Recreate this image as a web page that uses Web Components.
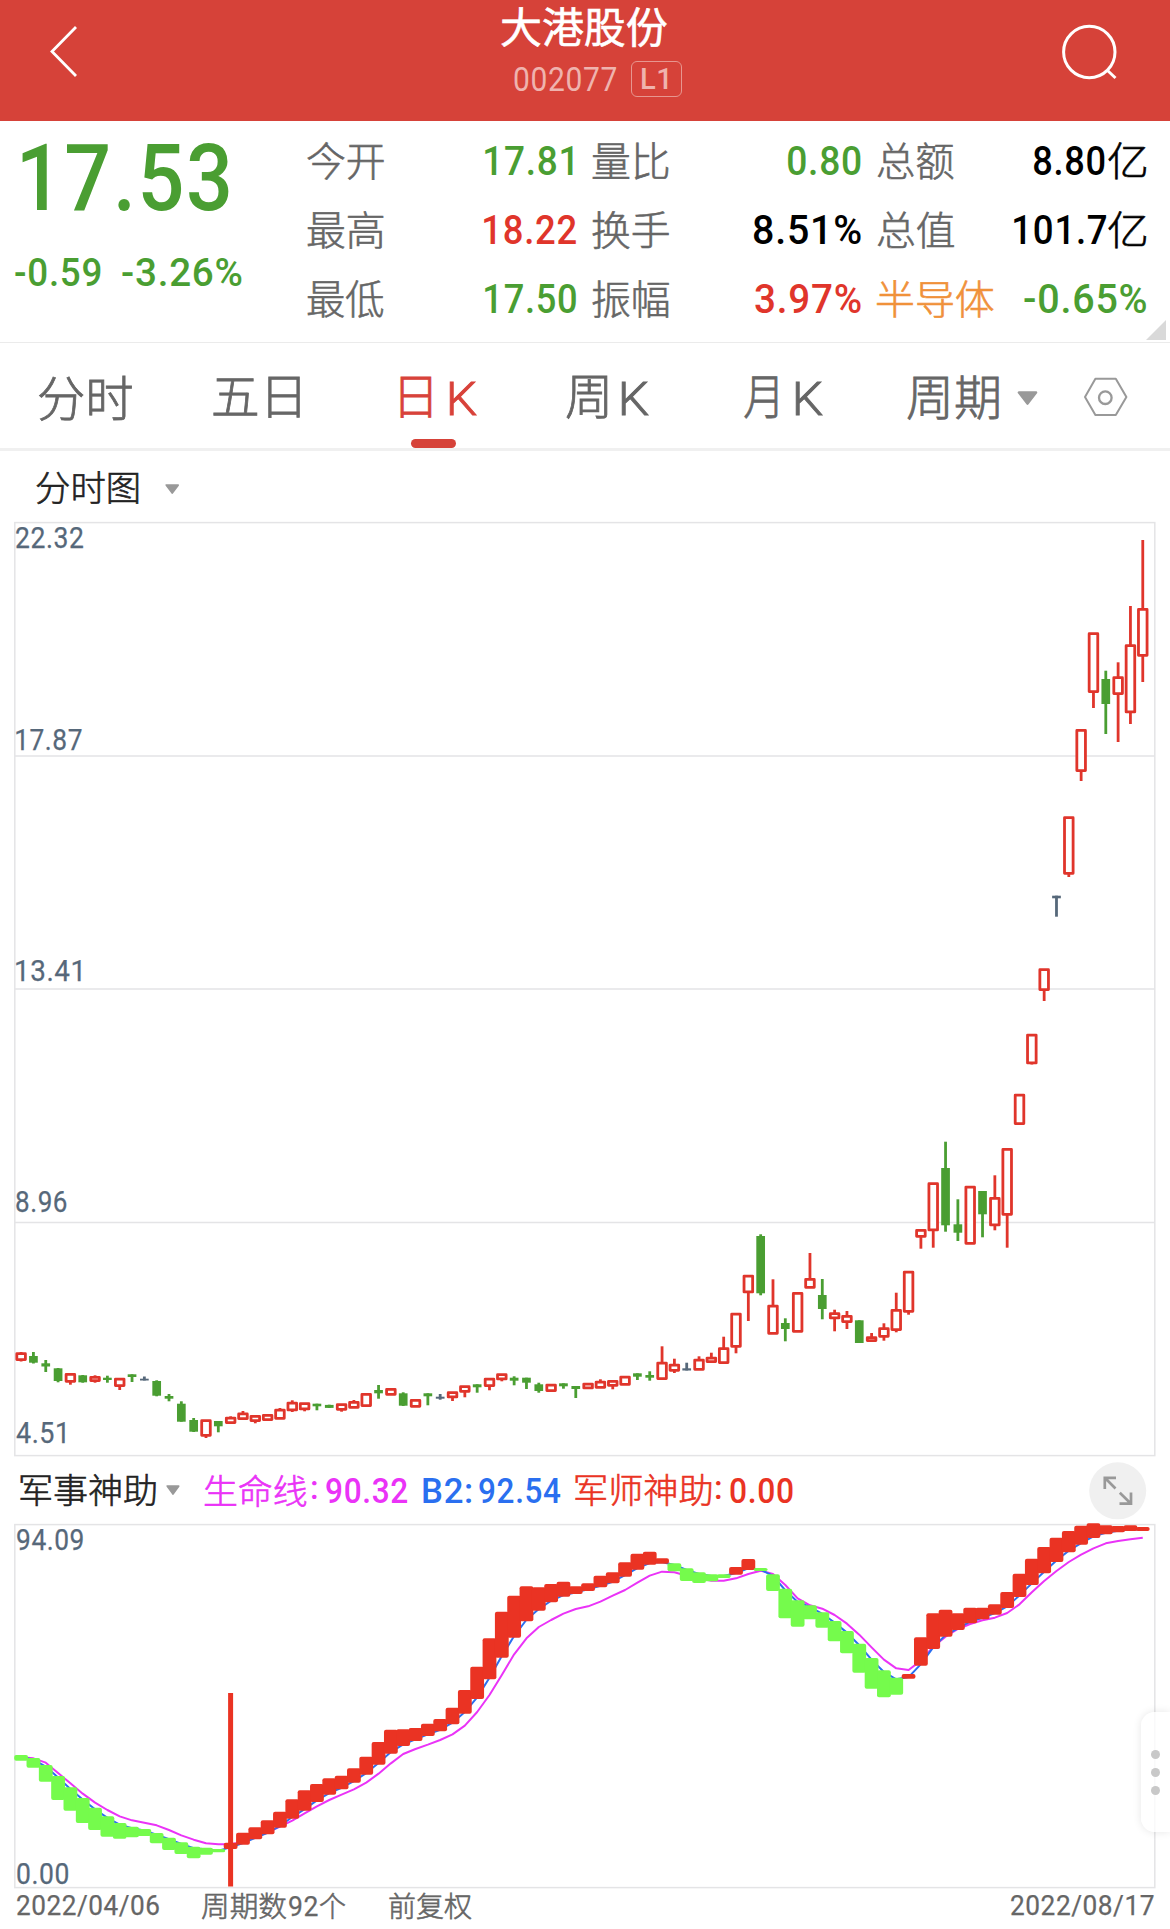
<!DOCTYPE html>
<html lang="zh-CN">
<head>
<meta charset="utf-8">
<title>大港股份 002077</title>
<style>
html,body{margin:0;padding:0;background:#fff}
body{width:1170px;height:1929px;overflow:hidden}
</style>
</head>
<body>
<stock-app></stock-app>
<script>
const GREEN='#4a9e32', RED='#e0352b', GREY='#56687a';
const FONT='Roboto,"Noto Sans CJK SC",sans-serif';
const pen=document.createElement('canvas').getContext('2d');

/* Text whose ink is fitted to a given width and centred vertically in its box. */
class FitText extends HTMLElement{
  connectedCallback(){
    const w=+this.getAttribute('w'), size=+this.getAttribute('size'), text=this.textContent;
    const cjk=/[\u4e00-\u9fff]/.test(text);
    const weight=this.getAttribute('weight')||(cjk?300:500);
    const stroke=this.getAttribute('stroke')||(cjk?(size>45?0.8:0.6):0);
    const sp=cjk?0:size*0.02;
    pen.font=`${weight} ${size}px ${FONT}`;
    pen.letterSpacing=sp+'px';
    const m=pen.measureText(text);
    const k=w/(m.actualBoundingBoxRight+m.actualBoundingBoxLeft);
    const base=size/2+(m.fontBoundingBoxAscent-m.fontBoundingBoxDescent)/2;
    const mid=base-(m.actualBoundingBoxAscent-m.actualBoundingBoxDescent)/2;
    this.attachShadow({mode:'open'}).innerHTML=`<style>
      :host{display:block;flex:none;width:${w}px;height:${size}px;white-space:pre}
      span{display:block;width:max-content;font:${weight} ${size}px/${size}px ${FONT};letter-spacing:${sp}px;
        -webkit-text-stroke:${stroke}px currentColor;
        transform-origin:0 0;transform:translate(${m.actualBoundingBoxLeft*k}px,${size/2-mid}px) scaleX(${k})}
      </style><span><slot></slot></span>`;
  }
}
customElements.define('fit-text',FitText);

const define=(name,html)=>customElements.define(name,class extends HTMLElement{
  connectedCallback(){ if(!this.shadowRoot) this.attachShadow({mode:'open'}).innerHTML=typeof html==='function'?html(this):html; }
});
const t=(text,w,size,left=0,extra='')=>`<fit-text w="${w}" size="${size}" ${extra} style="margin-left:${left}px">${text}</fit-text>`;
const REG='weight="400" stroke="0.25"', KAY='weight="300" stroke="0.9"';

define('drop-caret',el=>`<style>:host{display:block;flex:none;width:${el.getAttribute('w')}px}svg{display:block}</style>
  <svg width="${el.getAttribute('w')}" height="${el.getAttribute('h')}" viewBox="0 0 21 14" preserveAspectRatio="none"><path d="M2 1.5H19L10.5 12.5Z" fill="#999" stroke="#999" stroke-width="2.6" stroke-linejoin="round"/></svg>`);

define('app-header',`<style>
  :host{display:flex;height:121px;background:#d64239;color:#fff}
  svg{display:block;flex:none}
  .mid{width:182px;display:flex;flex-direction:column}
  .name{display:flex;align-items:center;height:56px}
  .code{display:flex;align-items:center;height:46px;color:#efb3ae}
  .tag{box-sizing:border-box;width:51px;height:36px;border:1.5px solid #e7968f;border-radius:6px;margin-left:14px;display:flex;align-items:center}
  </style>
  <svg width="500" height="121" fill="none" stroke="#fff" stroke-width="2.8"><path d="M76 27L52 51.5L76 76"/></svg>
  <div class="mid"><div class="name">${t('大港股份',166,41.7,0.6,'weight="400" stroke="0.6"')}</div>
  <div class="code">${t('002077',102.5,33.5,14.2,'weight="400"')}<div class="tag">${t('L1',26,30,10.5)}</div></div></div>
  <svg width="488" height="121" viewBox="682 0 488 121" fill="none" stroke="#fff" stroke-width="3"><circle cx="1089.3" cy="52" r="25.7"/><path d="M1107 70L1115.5 78"/></svg>`);

define('stat-cell',`<style>
  :host{display:flex;justify-content:space-between;align-items:center;height:69px}
  ::slotted(*){flex:none} .v{display:flex;align-items:center;color:var(--c,#000)} .l{color:var(--l,#666)}
  </style><div class="l"><slot name="label"></slot></div><div class="v"><slot></slot></div>`);
const cell=(l,lw,c,vals,lc='#666')=>`<stat-cell style="--c:${c};--l:${lc}"><fit-text slot="label" w="${lw}" size="39.7">${l}</fit-text>${vals}</stat-cell>`;

define('quote-panel',`<style>
  :host{display:flex;height:221px;border-bottom:1px solid #ebebeb;position:relative;color:${GREEN}}
  .price{width:307px;flex:none}
  .big{display:flex;align-items:center;height:110px}
  .chg{display:flex;align-items:center;height:81px}
  .grid{display:grid;grid-template-columns:269px 268.6px 269px;column-gap:16.3px;grid-auto-rows:69.1px;padding-top:5px;margin-left:.2px}
  .corner{position:absolute;right:4px;bottom:2px}
  </style>
  <div class="price"><div class="big">${t('17.53',206.7,93,21.8)}</div><div class="chg">${t('-0.59',86,39.4,14.5)}${t('-3.26%',120,39.4,21)}</div></div>
  <div class="grid">
  ${cell('今开',77,GREEN,t('17.81',88,41).replace('margin-left:0px','margin-right:3.7px'))}
  ${cell('量比',77,GREEN,t('0.80',73,41))}
  ${cell('总额',77,'#000',t('8.80',71,41)+t('亿',38,39.7,3.8))}
  ${cell('最高',77,RED,t('18.22',92,41))}
  ${cell('换手',77,'#000',t('8.51%',107,41))}
  ${cell('总值',77,'#000',t('101.7',92.5,41)+t('亿',38,39.7,2.3))}
  ${cell('最低',77,GREEN,t('17.50',91.5,41))}
  ${cell('振幅',77,RED,t('3.97%',106,41))}
  ${cell('半导体',117,GREEN,t('-0.65%',122.5,41),'#f0913a')}
  </div>
  <svg class="corner" width="20" height="20"><path d="M20 0V20H0Z" fill="#d9d9d9"/></svg>`);

define('period-tab',`<style>
  :host{display:flex;align-items:center;height:105px;padding-top:5px;box-sizing:border-box;position:relative;color:#666}
  :host([active]){color:#d8423a}
  :host([active])::after{content:"";position:absolute;left:10.7px;bottom:0;width:45px;height:9px;border-radius:4.5px;background:#d64239}
  </style><slot></slot>`);
define('period-tabs',`<style>
  :host{display:flex;height:105px;border-bottom:3px solid #f0f0f0}
  svg{display:block;margin:34px 0 0 45px;flex:none}
  </style>
  <period-tab style="margin-left:39.4px">${t('分时',92.6,48)}</period-tab>
  <period-tab style="margin-left:81.5px">${t('五日',87,48)}</period-tab>
  <period-tab active style="margin-left:100.2px">${t('日',30.6,48)}${t('K',26.4,47,18.9,KAY)}</period-tab>
  <period-tab style="margin-left:89.4px">${t('周',41.3,48)}${t('K',26.4,47,15,KAY)}</period-tab>
  <period-tab style="margin-left:95.4px">${t('月',33,48)}${t('K',26.4,47,19.4,KAY)}</period-tab>
  <period-tab style="margin-left:84.2px">${t('周期',92,48)}<drop-caret w="21" h="14" style="margin-left:17.6px"></drop-caret></period-tab>
  <svg width="46" height="42" viewBox="1083 377 46 42" fill="none" stroke="#999" stroke-width="2"><path d="M1085 397L1095.4 378.8H1115.8L1126.4 397L1115.8 415H1095.4Z" stroke-linejoin="round"/><circle cx="1105.3" cy="397.7" r="6.3" stroke-width="2.3"/></svg>`);

define('title-bar',`<style>:host{display:flex;align-items:center;height:71px;padding-top:4px;box-sizing:border-box;color:#222}</style>
  ${t('分时图',102,35.2,36.4)}<drop-caret w="14.5" h="10" style="margin-left:26.9px"></drop-caret>`);

/* Candles: kind, high, body top, body bottom, low */
const candles=`r1352,1352.3,1361,1361.5 g1352,1356,1362.7,1363.5 g1360,1363.3,1366.5,1372 g1368,1368.3,1381,1382.3 r1373,1373,1382.7,1384.7 g1375,1375.3,1382.3,1382.7 r1375.3,1376,1382,1382.7 g1375.7,1377.7,1380,1382.7 r1377.7,1377.7,1387,1390 g1374.3,1374.3,1377,1382
x1376.5,1378.7,1380.5,1380.5 g1380.3,1381,1395.7,1396.3 g1394,1396,1398.7,1401.3 g1401.3,1403.7,1421.7,1421.7 g1418,1420,1431.7,1432 r1419.3,1419.3,1436.7,1438 g1421,1421,1426.3,1432.3 r1416.3,1416.7,1424,1424 r1411,1412.5,1420,1420 r1415,1415,1422,1423.3
r1414,1414,1421,1421 r1408,1408.7,1419.7,1419.7 r1400.3,1401.7,1411.3,1412 r1402.3,1402.3,1410.3,1411.3 g1403.7,1403.7,1406.3,1410.3 g1404.7,1404.9,1407.9,1408 r1403.3,1403.3,1410.7,1411.7 r1400,1401,1408.7,1408.7 r1393,1393,1407,1407 g1385,1390,1393.3,1398.7
r1388,1388,1395.7,1395.7 g1392.3,1393.3,1405.7,1406 r1399,1399,1407.7,1407.7 g1393.3,1393.3,1396.3,1405.3 x1394,1396.7,1398.7,1399.7 r1391.3,1391.3,1398.3,1401 r1385.3,1385.3,1392.7,1397.3 g1384.3,1384.3,1387.3,1392.7 r1377.7,1377.7,1387,1390.3 r1373.3,1373.3,1380.3,1381.3
g1376.3,1377.7,1380.7,1385.3 g1377.7,1377.7,1382.7,1389 g1382.7,1384.3,1391,1392.7 r1383.7,1383.7,1392,1392 g1383.3,1383.3,1386.3,1388.7 g1386,1386,1389,1398 r1382.7,1382.7,1389.3,1389.3 r1379.3,1380.7,1388.7,1388.7 r1380,1380,1386.7,1389.3 r1375.7,1375.7,1385.7,1385.7
g1373.3,1373.3,1376.7,1380 g1371.3,1375,1377.7,1380.7 r1346.3,1361.7,1380,1380 r1358.7,1363.7,1371.7,1373 x1362.7,1368.3,1370.5,1370.5 r1356.3,1358.7,1370.7,1370.7 r1352.7,1356.7,1363,1363 r1336.7,1347.3,1364,1364 r1312.7,1312.7,1347.7,1353.3 r1274.7,1274.7,1293.3,1321
g1234.3,1236,1293.3,1295.3 r1279.3,1304.7,1334.7,1334.7 g1318.3,1323,1329,1341.3 r1292,1292,1332.7,1332.7 r1253,1278,1288.7,1288.7 g1279,1295,1309,1319.3 r1309.7,1312.3,1319.3,1331.3 r1311,1315,1323,1329 g1320.3,1320.3,1343,1343 r1333,1336.3,1342,1342
r1323.3,1327.3,1337.7,1340.7 r1292.7,1309,1331,1332.3 r1270.7,1270.7,1312.7,1314.7 r1229,1229,1237.7,1248.7 r1182.3,1182.3,1231.3,1247.7 g1141.7,1168,1225.3,1231.7 g1199.3,1224.3,1232.7,1241 r1185.7,1185.7,1244.7,1244.7 g1191,1191,1214.3,1237.3 r1175.3,1197,1226.3,1230.3
r1148,1148,1215.7,1247.7 r1093.7,1093.7,1125,1125 r1033.7,1033.7,1064.3,1064.5 r968.3,968.3,991,1001 x895.7,895.7,898.3,916.7 r816.3,816.3,874.7,877 r729,729,772,781 r632.3,632.3,693,708 g670.7,679,704,734 r662.3,676.3,695,742 r606,644.3,713.3,724 r540,608,656.7,682`.split(/\s+/);
const X=i=>21.1+i*12.326;

function candleSvg(){
  return candles.map((c,i)=>{
    const [hi,a,b,lo]=c.slice(1).split(',').map(Number), x=X(i), k=c[0];
    if(k==='r'){
      let s=`<rect x="${x-4.3}" y="${a+1.4}" width="8.6" height="${Math.max(b-a-2.8,1)}" fill="#fff" stroke="${RED}" stroke-width="2.8" stroke-linejoin="round"/>`;
      if(hi<a) s+=`<path d="M${x} ${hi}V${a+1}" stroke="${RED}" stroke-width="2.8"/>`;
      if(lo>b) s+=`<path d="M${x} ${b-1}V${lo}" stroke="${RED}" stroke-width="2.8"/>`;
      return s;
    }
    const col=k==='g'?GREEN:GREY;
    return `<rect x="${x-4.35}" y="${a}" width="8.7" height="${b-a}" fill="${col}"/><path d="M${x} ${hi}V${lo}" stroke="${col}" stroke-width="2.8"/>`;
  }).join('');
}

define('price-chart',`<style>
  :host{display:block;position:relative;margin:0 15px 0 14px;height:934px}
  svg{display:block;overflow:visible}
  .ax{position:absolute;left:2.2px;color:${GREY}}
  </style>
  <svg width="1141" height="934" viewBox="14 522 1141 934">
  <g fill="none" stroke="#e4e4e6" stroke-width="1.5"><rect x="14.8" y="522.6" width="1140" height="933"/><path d="M15 756H1155M15 989H1155M15 1222.5H1155"/></g>
  ${candleSvg()}</svg>
  ${[['22.32',537.3,67.4],['17.87',739.3,66],['13.41',970.5,65],['8.96',1201.5,51],['4.51',1432.3,49]].map(([s,y,w])=>`<div class="ax" style="top:${y-522-14.6}px">${t(s,w,29.3,0,REG)}</div>`).join('')}`);

define('indicator-bar',`<style>
  :host{display:flex;align-items:center;height:68px;position:relative;color:#222}
  .m{color:#ea33f7}.b{color:#2a6ff0}.r{color:#ea3323}
  .m,.b,.r{display:flex;align-items:center}
  svg{position:absolute;left:1089px;top:5.5px}
  </style>
  ${t('军事神助',135.5,34.6,20.3)}<drop-caret w="14" h="10" style="margin-left:10px"></drop-caret>
  <div class="m">${t('生命线',102,34.6,25.7)}${t(':',4.8,34,4.8)}${t('90.32',81.5,35,8.7)}</div>
  <div class="b">${t('B2:',48,35,15.5)}${t('92.54',82,35,8)}</div>
  <div class="r">${t('军师神助',136,34.6,14.5)}${t(':',4.8,34,4.5)}${t('0.00',63.3,35,9.5)}</div>
  <svg width="58" height="58" viewBox="1089 1461.5 58 58"><circle cx="1117.7" cy="1490.3" r="28.5" fill="#f0f0f0"/><path d="M1104.8 1488.5V1477.3H1116M1104.8 1477.3L1115.5 1488M1131 1492V1503.2H1119.5M1131 1503.2L1119.8 1492.3" fill="none" stroke="#999" stroke-width="2.7"/></svg>`);

/* Trend blocks in thirds of a pixel below each segment's origin */
const third=(o,s)=>s.split(' ').map(p=>p.split('-').map(v=>o+v/3));
const blocks=[
 ...third(1700,'165-182 174-203 195-245 228-300 262-332 294-369 323-390 349-410 369-416 380-412 387-408 399-430 413-450 427-462 440-475 443-464 447-457 428-447 398-434 382-418 361-403 335-383 298-356 271-332 252-306 235-284 227-268 205-248 170-224 126-194 89-161 88-138 84-123 71-108 57-94 23-73'),
 ...third(1500,'570-641 500-597 415-538 335-473 287-413 259-364 262-332 252-307 245-290 259-282 250-273 227-262 217-250 187-230 161-209 155-194 175-191 190-214 205-243 217-249 223-244 223-234 201-224 177-210 204-213'),
 ...third(1450,'373-423 416-505 451-530 466-508 487-533 513-574 543-610 581-668 624-716 661-742 683-734 672-686 562-647 490-597 479-560 490-540 473-520 473-508 463-494 426-474 371-441 326-405 291-370 263-336 243-307 227-284 220-264 226-253 228-247 226-243 231-243')];
const life=[
 ...third(1700,'172 175 188 219 250 281 308 330 349 361 368 376 390 406 419 430 433 433 426 412 397 380 362 340 319 300 284 268 248 221 190 162 147 134 120 103'),
 ...third(1500,'677 636 585 525 463 415 381 360 341 327 319 305 287 270 248 227 215 217 227 235 242 242 235 222 212'),
 ...third(1450,'372 405 445 466 476 495 521 554 592 629 655 660 632 590 560 537 522 511 503 489 463 427 393 363 336 314 295 280 273 268 263')].map(v=>v[0]);
const isGreen=i=>i<=16||(i>=53&&i<=57)||(i>=60&&i<=71);
const line=(ys,c)=>`<polyline fill="none" stroke="${c}" stroke-width="2" stroke-linejoin="round" points="${ys.map((y,i)=>X(i)+','+y).join(' ')}"/>`;

define('trend-chart',`<style>
  :host{display:block;position:relative;margin:0 15px 0 14px;height:364px}
  svg{display:block;overflow:visible}
  .ax{position:absolute;left:2.6px;color:${GREY}}
  </style>
  <svg width="1141" height="364" viewBox="14 1524 1141 364">
  <rect x="14.8" y="1524.6" width="1140" height="363" fill="none" stroke="#e4e4e6" stroke-width="1.5"/>
  ${line(life,'#ea33f7')}${line(blocks.map((b,i)=>isGreen(i)?b[0]+1.6:b[1]-1.6),'#2a6ff0')}
  ${blocks.map((b,i)=>`<rect x="${X(i)-6.9}" y="${b[0]}" width="13.8" height="${b[1]-b[0]}" rx="2" fill="${isGreen(i)?'#75fb4c':'#ea3323'}"/>`).join('')}
  <rect x="228.1" y="1693" width="5" height="193.5" fill="#ea3323"/></svg>
  ${[['94.09',1539.5,66],['0.00',1873.3,51]].map(([s,y,w])=>`<div class="ax" style="top:${y-1524-14.6}px">${t(s,w,29.3,0,REG)}</div>`).join('')}`);

define('chart-footer',`<style>:host{display:flex;align-items:center;height:35px;padding-top:1px;box-sizing:border-box;color:#666}</style>
  ${t('2022/04/06',142,28.5,16.5,REG)}${t('周期数',84.5,28.5,43.7)}${t('92',28.5,28.5,2.3,REG)}${t('个',25.5,28.5,2.5)}${t('前复权',82.5,28.5,43.2)}${t('2022/08/17',142.5,28.5,539.8,REG)}`);

define('side-handle',`<style>
  :host{position:absolute;right:0;top:1712px;width:29px;height:120px;box-sizing:border-box;border-radius:14px 0 0 14px;background:rgba(255,255,255,.78);box-shadow:0 0 9px rgba(0,0,0,.1);display:flex;flex-direction:column;align-items:center;justify-content:center;gap:9px}
  i{width:9px;height:9px;border-radius:50%;background:#c8c8c8}
  </style><i></i><i></i><i></i>`);

define('stock-app',`<style>:host{display:flex;flex-direction:column;width:1170px;height:1929px;background:#fff;position:relative;overflow:hidden}</style>
  <app-header></app-header><quote-panel></quote-panel><period-tabs></period-tabs><title-bar></title-bar>
  <price-chart></price-chart><indicator-bar></indicator-bar><trend-chart></trend-chart><chart-footer></chart-footer><side-handle></side-handle>`);
</script>
</body>
</html>
